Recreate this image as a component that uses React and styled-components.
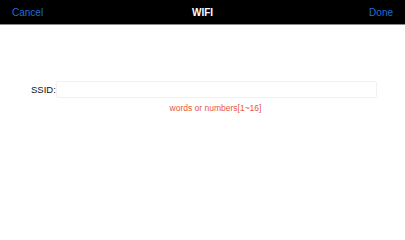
import React from "react";
import styled, { createGlobalStyle } from "styled-components";

const Global = createGlobalStyle`
  html, body { margin: 0; padding: 0; background: #fff; }
  body { font-family: "Liberation Sans", Arial, sans-serif; }
`;

const Page = styled.div`
  width: 405px;
  height: 228px;
  background: #fff;
  display: flex;
  flex-direction: column;
`;

const NavBar = styled.div`
  height: 24px;
  background: #000;
  border-bottom: 1px solid #8a8a8a;
  display: grid;
  grid-template-columns: 1fr auto 1fr;
  align-items: center;
  padding: 0 12px;
  box-sizing: content-box;
`;

const NavButton = styled.span`
  color: #1d6fd6;
  font-size: 10px;
  justify-self: ${(p) => (p.$right ? "end" : "start")};
`;

const Title = styled.span`
  color: #fff;
  font-size: 10px;
  font-weight: 700;
`;

const Form = styled.div`
  display: flex;
  flex-direction: column;
  align-items: stretch;
  padding: 56px 28px 0 31px;
`;

const Row = styled.div`
  display: flex;
  align-items: center;
`;

const Label = styled.label`
  font-size: 9.5px;
  color: #111;
  flex-shrink: 0;
  white-space: nowrap;
`;

const Input = styled.input`
  flex: 1;
  min-width: 0;
  height: 17px;
  box-sizing: border-box;
  border: 1px solid #f1f1f1;
  border-radius: 2px;
  outline: none;
  background: #fff;
  font-size: 10px;
  padding: 0 4px;
  margin: 0;
`;

const Hint = styled.div`
  margin-top: 5px;
  padding-left: 23px;
  text-align: center;
  color: #e9553c;
  font-size: 8.5px;
`;

export default function App() {
  return (
    <Page>
      <Global />
      <NavBar>
        <NavButton>Cancel</NavButton>
        <Title>WIFI</Title>
        <NavButton $right>Done</NavButton>
      </NavBar>
      <Form>
        <Row>
          <Label>SSID:</Label>
          <Input type="text" />
        </Row>
        <Hint>words or numbers[1~16]</Hint>
      </Form>
    </Page>
  );
}
